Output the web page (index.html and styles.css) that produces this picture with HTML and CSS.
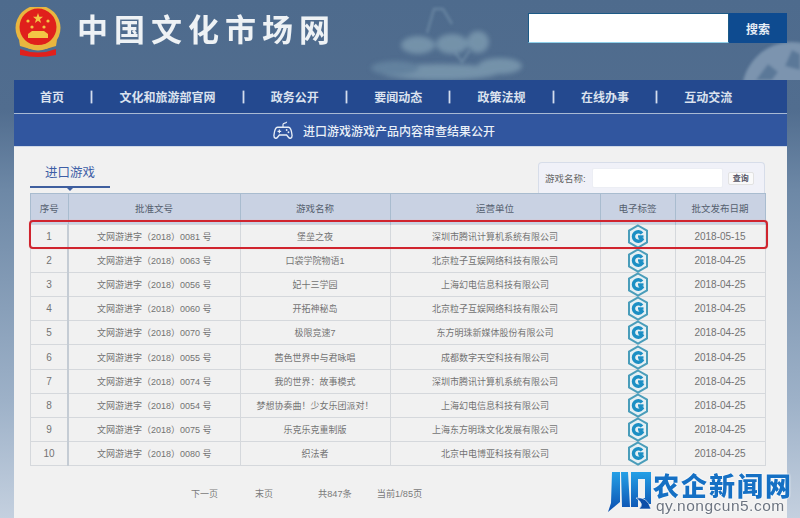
FILE: index.html
```html
<!DOCTYPE html>
<html lang="zh-CN">
<head>
<meta charset="utf-8">
<title>中国文化市场网</title>
<link rel="stylesheet" href="styles.css">
</head>
<body>
<svg width="0" height="0" class="defs">
  <symbol id="g" viewBox="0 0 22 25">
    <path d="M11 1.500 20 6.700V18.300L11 23.500 2 18.300V6.700Z" fill="#e6f0f4" stroke="#4a9dba" stroke-width="2"/>
    <path d="M15 9.500A4.800 4.800 0 1 0 15 15.500L12.500 13" fill="none" stroke="#1c8fc4" stroke-width="3.400"/>
    <path d="M11 12.500H16.500" stroke="#1c8fc4" stroke-width="2.400"/>
  </symbol>
</svg>
<div class="blurred">
<header class="top">
  <svg class="decor" viewBox="0 0 800 80" width="800" height="80" aria-hidden="true">
    <defs>
      <filter id="soft"><feGaussianBlur stdDeviation="2.500"/></filter>
      <filter id="softer"><feGaussianBlur stdDeviation="1.500"/></filter>
    </defs>
    <g filter="url(#soft)" fill="#83a1b5" opacity=".72">
      <ellipse cx="418" cy="45" rx="17" ry="9"/>
      <ellipse cx="452" cy="44" rx="16" ry="10"/>
      <ellipse cx="478" cy="42" rx="11" ry="11"/>
      <ellipse cx="440" cy="72" rx="60" ry="8"/>
      <ellipse cx="500" cy="66" rx="22" ry="8"/>
      <ellipse cx="395" cy="68" rx="24" ry="7" fill="#6b8aa5"/>
    </g>
    <g filter="url(#softer)" fill="none" stroke="#7c99b0" stroke-width="2.500" opacity=".55">
      <path d="M427 33 434 9H443L452 24"/>
      <path d="M455 52 462 62 470 50"/>
    </g>
    <g filter="url(#softer)" opacity=".75">
      <circle cx="792" cy="92" r="50" fill="#8ba2ba"/>
      <path d="M768 64 778 72 772 80H756ZM792 50 800 54V70L785 66Z" fill="#5f7d9b"/>
    </g>
  </svg>
  <svg class="emblem" viewBox="0 0 48 50" width="48" height="50" role="img" aria-label="国徽">
    <circle cx="24" cy="21" r="22.500" fill="#e9b63f"/>
    <circle cx="24" cy="20" r="18.500" fill="#e0201c"/>
    <path d="M24 6l1.300 3.800H29l-3 2.400 1.100 3.800-3.100-2.300-3.100 2.300 1.100-3.800-3-2.400h3.700Z" fill="#f3c545"/>
    <circle cx="14" cy="14" r="1.600" fill="#f3c545"/><circle cx="34" cy="14" r="1.600" fill="#f3c545"/>
    <circle cx="18" cy="20" r="1.600" fill="#f3c545"/><circle cx="30" cy="20" r="1.600" fill="#f3c545"/>
    <path d="M14 31V27L18 24H30L34 27V31Z" fill="#f3c545"/>
    <path d="M5 33Q24 43 43 33L42 39Q24 46 6 39Z" fill="#e9b63f"/>
    <path d="M6 42Q24 49 42 42V48Q24 52 6 48Z" fill="#e0201c"/>
  </svg>
  <div class="site-name">中国文化市场网</div>
  <form class="search">
    <input class="search-input" type="text" aria-label="搜索">
    <button class="search-btn" type="button">搜索</button>
  </form>
</header>
<main class="panel">
  <nav class="nav">
    <a>首页</a><i></i><a>文化和旅游部官网</a><i></i><a>政务公开</a><i></i><a>要闻动态</a><i></i><a>政策法规</a><i></i><a>在线办事</a><i></i><a>互动交流</a>
  </nav>
  <div class="title-bar">
    <svg class="pad" viewBox="0 0 22 22" width="20" height="20" aria-hidden="true">
      <path d="M5 8H17C19 8 20.500 12 21 17C21 20 18.500 21 17 19L15 16.500H7L5 19C3.500 21 1 20 1 17C1.500 12 3 8 5 8Z" fill="none" stroke="#e8eef6" stroke-width="1.500"/>
      <path d="M11 8V5C11 3 15 4 15 2M5 12.500H9M7 10.500V14.500" fill="none" stroke="#e8eef6" stroke-width="1.300"/>
      <circle cx="15" cy="11" r="1" fill="#e8eef6"/><circle cx="17" cy="13.500" r="1" fill="#e8eef6"/>
    </svg>
    <span>进口游戏游戏产品内容审查结果公开</span>
  </div>
  <div class="content">
    <div class="tools">
      <div class="tab">进口游戏</div>
      <div class="filter">
        <label class="filter-label">游戏名称:</label>
        <input class="filter-input" type="text" aria-label="游戏名称">
        <button class="filter-btn" type="button">查询</button>
      </div>
    </div>
    <div class="table-wrap">
      <table class="list">
        <colgroup><col class="c1"><col class="c2"><col class="c3"><col class="c4"><col class="c5"><col class="c6"></colgroup>
        <thead><tr><th>序号</th><th>批准文号</th><th>游戏名称</th><th>运营单位</th><th>电子标签</th><th>批文发布日期</th></tr></thead>
        <tbody>
          <tr><td>1</td><td>文网游进字（2018）0081 号</td><td>堡垒之夜</td><td>深圳市腾讯计算机系统有限公司</td><td><svg class="tag"><use href="#g"/></svg></td><td>2018-05-15</td></tr>
          <tr><td>2</td><td>文网游进字（2018）0063 号</td><td>口袋学院物语1</td><td>北京粒子互娱网络科技有限公司</td><td><svg class="tag"><use href="#g"/></svg></td><td>2018-04-25</td></tr>
          <tr><td>3</td><td>文网游进字（2018）0056 号</td><td>妃十三学园</td><td>上海幻电信息科技有限公司</td><td><svg class="tag"><use href="#g"/></svg></td><td>2018-04-25</td></tr>
          <tr><td>4</td><td>文网游进字（2018）0060 号</td><td>开拓神秘岛</td><td>北京粒子互娱网络科技有限公司</td><td><svg class="tag"><use href="#g"/></svg></td><td>2018-04-25</td></tr>
          <tr><td>5</td><td>文网游进字（2018）0070 号</td><td>极限竞速7</td><td>东方明珠新媒体股份有限公司</td><td><svg class="tag"><use href="#g"/></svg></td><td>2018-04-25</td></tr>
          <tr><td>6</td><td>文网游进字（2018）0055 号</td><td>茜色世界中与君咏唱</td><td>成都数字天空科技有限公司</td><td><svg class="tag"><use href="#g"/></svg></td><td>2018-04-25</td></tr>
          <tr><td>7</td><td>文网游进字（2018）0074 号</td><td>我的世界：故事模式</td><td>深圳市腾讯计算机系统有限公司</td><td><svg class="tag"><use href="#g"/></svg></td><td>2018-04-25</td></tr>
          <tr><td>8</td><td>文网游进字（2018）0054 号</td><td>梦想协奏曲！少女乐团派对！</td><td>上海幻电信息科技有限公司</td><td><svg class="tag"><use href="#g"/></svg></td><td>2018-04-25</td></tr>
          <tr><td>9</td><td>文网游进字（2018）0075 号</td><td>乐克乐克重制版</td><td>上海东方明珠文化发展有限公司</td><td><svg class="tag"><use href="#g"/></svg></td><td>2018-04-25</td></tr>
          <tr><td>10</td><td>文网游进字（2018）0080 号</td><td>织法者</td><td>北京中电博亚科技有限公司</td><td><svg class="tag"><use href="#g"/></svg></td><td>2018-04-25</td></tr>
        </tbody>
      </table>
      <div class="highlight"></div>
    </div>
    <div class="pager">
      <span class="p1">下一页</span><span class="p2">末页</span><span class="p3">共847条</span><span>当前1/85页</span>
    </div>
  </div>
</main>
</div>
<div class="watermark">
  <svg class="nd" viewBox="0 0 44 42" width="44" height="42" role="img" aria-label="logo">
    <defs><linearGradient id="ndg" x1="0" y1="0" x2="0" y2="1"><stop offset="0" stop-color="#25a0e6"/><stop offset="1" stop-color="#0c4fb0"/></linearGradient></defs>
    <path d="M4 1H12V31L0 41 3 32ZM13 1H20L22 36H14ZM23 1H43V33H40L35 27H37V8H30V36H23Z" fill="url(#ndg)"/>
    <path d="M28 27Q39 25 43 38H31Q37 33 28 27Z" fill="#0d4ea8" stroke="#fff" stroke-width=".6"/>
  </svg>
  <div class="wm-text">
    <div class="wm-cn">农企新闻网</div>
    <div class="wm-url">qy.nongcun5.com</div>
  </div>
</div>
</body>
</html>
```
FILE: styles.css
```css
* { box-sizing: border-box; }
html, body { margin: 0; height: 518px; overflow: hidden; }
body {
  position: relative;
  width: 800px;
  font-family: "Liberation Sans", "Noto Sans CJK SC", sans-serif;
  background: linear-gradient(180deg, #4e6b8d 0, #516d8f 110px, #6d88a6 190px, #9db1c8 400px, #c4d0df 518px);
}
.defs { position: absolute; }
.blurred { filter: blur(.45px); }

.top { position: relative; height: 80px; display: flex; align-items: flex-start; }
.decor { position: absolute; left: 0; top: 0; }
.emblem { position: relative; margin: 7px 0 0 14px; }
.site-name {
  position: relative;
  margin: 13px 0 0 15px;
  font-size: 31px;
  line-height: 36px;
  letter-spacing: 6px;
  font-weight: 700;
  color: #eef2f5;
}
.search { position: relative; display: flex; margin: 13px 13px 0 auto; height: 30px; }
.search-input { width: 201px; height: 30px; background: #fff; border: 1px solid #1c5a86; border-bottom-color: #8fd0ea; padding: 0; }
.search-btn {
  width: 58px; height: 30px; border: 0; padding: 0;
  background: #0e4b90; color: #e6edf5;
  font: bold 12px "Liberation Sans", "Noto Sans CJK SC", sans-serif;
}

.panel { margin: 0 13px 0 14px; }
.nav {
  height: 34px;
  display: flex;
  align-items: center;
  gap: 27.200px;
  padding-left: 26px;
  background: #24498f;
  border-bottom: 1px solid #a9bad4;
  color: #dbe2ee;
  font-size: 12px;
  font-weight: bold;
}
.nav i { width: 1px; height: 12px; background: #d3dded; box-shadow: 0 0 0 .4px #d3dded; }
.title-bar {
  height: 33px;
  display: flex;
  align-items: center;
  justify-content: center;
  gap: 10px;
  padding-right: 33px;
  background: #31569f;
  color: #eaf0f7;
  font-size: 12px;
  font-weight: 500;
  border-bottom: 1px solid #cfd8e6;
}
.content { height: 371px; background: #f1f1f1; padding: 0 22px 0 16px; }
.tools { height: 46px; display: flex; justify-content: space-between; align-items: flex-end; }
.tab {
  position: relative;
  width: 80px;
  height: 28px;
  padding-left: 15px;
  margin-bottom: 5px;
  font-size: 12.500px;
  line-height: 26px;
  color: #3d5ea6;
  border-bottom: 2px solid #3f5f9f;
}
.tab::after {
  content: "";
  position: absolute;
  left: 37px;
  bottom: -5px;
  border: 3px solid transparent;
  border-bottom: 0;
  border-top-color: #3f5f9f;
}
.filter {
  width: 227px;
  height: 31px;
  display: flex;
  align-items: center;
  padding: 0 10px 0 6px;
  background: #f0f1f8;
  border: 1px solid #d7dde9;
  border-bottom: 0;
  border-radius: 4px 4px 0 0;
  font-size: 9.500px;
  color: #666;
}
.filter-label { width: 48px; white-space: nowrap; }
.filter-input { width: 131px; height: 20px; margin: 0; padding: 0; background: #fff; border: 1px solid #eceef4; border-radius: 2px; }
.filter-btn {
  width: 27px; height: 13px; margin-left: 5px; padding: 0;
  background: #fafafa; border: 1px solid #e2e2e2; border-radius: 2px;
  color: #556;
  font: bold 8px/11px "Liberation Sans", "Noto Sans CJK SC", sans-serif;
}

.table-wrap { position: relative; }
.list { width: 734.500px; table-layout: fixed; border-collapse: collapse; font-size: 9px; color: #737373; text-align: center; }
.c1 { width: 37.500px; } .c2 { width: 172px; } .c3 { width: 150px; } .c4 { width: 210px; } .c5 { width: 75px; } .c6 { width: 90px; }
.list th {
  height: 31px;
  padding: 0 0 3px;
  font-weight: normal;
  font-size: 9.500px;
  color: #55606f;
  background: #c9d2e3;
  border: 1px solid #a9bccf;
  border-bottom: 0;
}
.list td { height: 24.100px; padding: 0; border: 1px solid #d5d8dc; }
.list td:first-child { font-size: 10px; }
.list td:nth-child(2) { border-left: 2px solid #c5ccd4; }
.list td:last-child { font-size: 10px; }
.tag { display: block; width: 22px; height: 25px; margin: -1px auto; }
.highlight {
  position: absolute;
  left: -1px; right: -3px; top: 27px;
  height: 29px;
  border: 2px solid #d0242e;
  border-radius: 4px;
  box-shadow: 0 0 1px #f0a0a0;
}
.pager { display: flex; margin-top: 21px; padding-left: 161px; font-size: 9px; line-height: 14px; color: #7a7a7a; }
.pager span:last-child { font-size: 9.200px; }
.p1 { margin-right: 37px; } .p2 { margin-right: 45px; } .p3 { margin-right: 25px; font-size: 9.200px; }

.watermark { position: absolute; left: 608px; top: 471px; display: flex; gap: 1px; }
.wm-text { display: flex; flex-direction: column; }
.wm-cn {
  font: 900 26px/27px "Noto Sans CJK SC", sans-serif;
  letter-spacing: 2px;
  color: #1570c4;
  text-shadow: 0 0 2px #fff, 0 0 2px #fff;
}
.wm-url {
  margin: 1px 0 0 3px;
  font: 15.500px/14px "Liberation Sans", sans-serif;
  letter-spacing: .5px;
  color: #6c7480;
  text-shadow: 0 0 2px #fff, 0 0 2px #fff;
}
```
